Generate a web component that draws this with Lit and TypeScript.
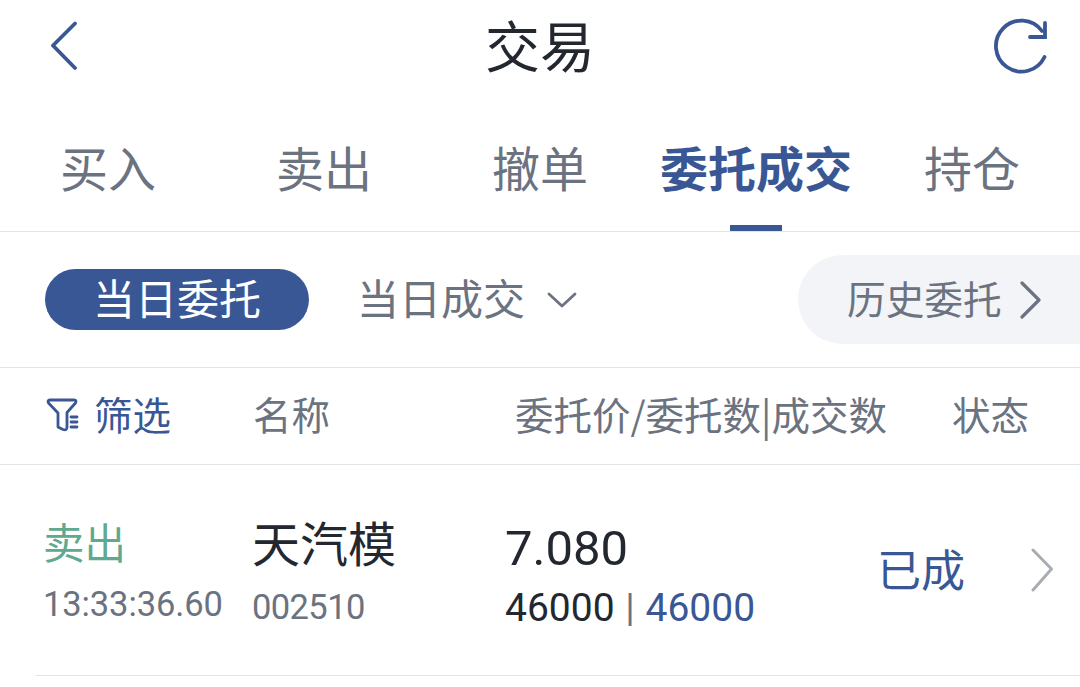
import { LitElement, html, css } from "lit";
import { customElement } from "lit/decorators.js";

@customElement("app-root")
export class AppRoot extends LitElement {
  static styles = css`
    :host {
      display: block;
      width: 1080px;
      height: 687px;
      overflow: hidden;
      background: #fff;
      font-family: "Noto Sans CJK SC", "Noto Sans", sans-serif;
      color: #6b7280;
    }
    .top {
      height: 93px;
      box-sizing: border-box;
      padding: 0 31px 1px 31px;
      display: grid;
      grid-template-columns: 1fr auto 1fr;
      align-items: center;
    }
    .back { display: block; width: 28px; height: 50px; margin-left: 19px; }
    .title { font-size: 55px; line-height: 70px; margin-bottom: 6px; color: #23272f; }
    .refresh { display: block; width: 56px; height: 56px; justify-self: end; }
    .tabs {
      height: 138px;
      display: grid;
      grid-template-columns: repeat(5, 216px);
      border-bottom: 1px solid #e3e4e6;
    }
    .tab {
      position: relative;
      height: 138px;
      box-sizing: border-box;
      padding-top: 8px;
      display: flex;
      align-items: center;
      justify-content: center;
      font-size: 48px;
      white-space: nowrap;
    }
    .tab.on { color: #3a5795; font-weight: 700; }
    .tab.on::after {
      content: "";
      position: absolute;
      left: 82px;
      bottom: 0;
      width: 52px;
      height: 6px;
      background: #3a5795;
    }
    .filters {
      height: 135px;
      display: flex;
      align-items: center;
      padding-left: 45px;
      border-bottom: 1px solid #e3e4e6;
    }
    .pill {
      width: 264px;
      height: 61px;
      box-sizing: border-box;
      padding-bottom: 6px;
      border-radius: 31px;
      background: #3a5795;
      color: #fff;
      font-size: 42px;
      line-height: 55px;
      text-align: center;
    }
    .today {
      margin-left: 48px;
      font-size: 42px;
      line-height: 56px;
      display: flex;
      align-items: center;
      gap: 22px;
    }
    .today span { margin-bottom: 6px; }
    .down { display: block; width: 30px; height: 16px; }
    .history {
      margin-left: auto;
      width: 282px;
      height: 89px;
      box-sizing: border-box;
      padding-left: 49px;
      border-radius: 45px 0 0 45px;
      background: #f2f4f7;
      display: flex;
      align-items: center;
      gap: 17px;
      font-size: 38.7px;
    }
    .history span { margin-bottom: 5px; }
    .chev { display: block; width: 23px; height: 38px; }
    .head {
      height: 96px;
      display: flex;
      align-items: center;
      font-size: 38.5px;
      border-bottom: 1px solid #e3e4e6;
      white-space: nowrap;
    }
    .head-text { line-height: 50px; margin-bottom: 6px; }
    .filter {
      width: 253px;
      box-sizing: border-box;
      padding-left: 46px;
      display: flex;
      align-items: center;
      gap: 14px;
      color: #3a5795;
    }
    .funnel { display: block; width: 34px; height: 34px; margin-bottom: 2px; }
    .h-name { width: 262px; }
    .h-nums { width: 437px; }
    .row {
      height: 210px;
      margin-left: 36px;
      display: flex;
      align-items: center;
      border-bottom: 1px solid #e3e4e6;
    }
    .c1 { width: 217px; padding-left: 8px; box-sizing: border-box; }
    .c2 { width: 252px; }
    .c3 { width: 374px; padding-top: 2px; }
    .side { font-size: 41.5px; line-height: 50px; color: #5fa98f; margin-top: 5px; margin-left: -1px; }
    .num { font-family: "Roboto", sans-serif; }
    .time { font-size: 34.5px; letter-spacing: -0.1px; line-height: 50px; margin-top: 13px; margin-left: -1px; }
    .name { font-size: 48px; line-height: 60px; margin-left: -1px; color: #23272f; }
    .code { font-size: 34.5px; letter-spacing: -0.6px; line-height: 44px; margin-top: 14px; margin-left: -1px; }
    .price { font-size: 49px; line-height: 58px; color: #23272f; margin-top: 10px; }
    .qty { font-size: 39px; line-height: 50px; color: #23272f; margin-top: 5px; }
    .sep { color: #6b7280; margin: 0 1px; }
    .blue { color: #3a5795; }
    .status { font-size: 44px; color: #3a5795; width: 153px; margin-left: -2px; margin-bottom: 4px; }
    .go { display: block; width: 24px; height: 44px; margin-left: 1px; }
  `;

  render() {
    return html`
      <div class="top">
        <svg class="back" viewBox="0 0 28 50" fill="none" stroke="#3a5795" stroke-width="3.8" stroke-linecap="round" stroke-linejoin="round">
          <path d="M25 2.5 L3 24.5 L25 47" />
        </svg>
        <div class="title">交易</div>
        <svg class="refresh" viewBox="0 0 56 56" fill="none" stroke="#3a5795" stroke-width="3.8" stroke-linecap="round">
          <path d="M49 13 A25.5 25.5 0 1 0 51.5 39" />
          <path d="M52 5 V19 H37" />
        </svg>
      </div>
      <div class="tabs">
        <div class="tab">买入</div>
        <div class="tab">卖出</div>
        <div class="tab">撤单</div>
        <div class="tab on">委托成交</div>
        <div class="tab">持仓</div>
      </div>
      <div class="filters">
        <div class="pill">当日委托</div>
        <div class="today">
          <span>当日成交</span>
          <svg class="down" viewBox="0 0 30 16" fill="none" stroke="#6b7280" stroke-width="2.8" stroke-linecap="round" stroke-linejoin="round">
            <path d="M2 2 L15 14 L28 2" />
          </svg>
        </div>
        <div class="history">
          <span>历史委托</span>
          <svg class="chev" viewBox="0 0 23 38" fill="none" stroke="#6b7280" stroke-width="3.2" stroke-linecap="round" stroke-linejoin="round">
            <path d="M3 2 L20 19 L3 36" />
          </svg>
        </div>
      </div>
      <div class="head">
        <div class="filter">
          <svg class="funnel" viewBox="0 0 34 34" fill="none" stroke="#3a5795" stroke-width="2.8" stroke-linecap="round" stroke-linejoin="round">
            <path d="M4 2 H28 Q31 2 29.5 5 L21 14.5 V29 Q21 33 17 31.5 L12 29 V15 L2.5 5 Q1 2.5 4 2 Z" />
            <path d="M25 19 H31 M25 24 H31 M25 29 H31" />
          </svg>
          <span class="head-text">筛选</span>
        </div>
        <div class="h-name head-text">名称</div>
        <div class="h-nums head-text">委托价/委托数|成交数</div>
        <div class="head-text">状态</div>
      </div>
      <div class="row">
        <div class="c1">
          <div class="side">卖出</div>
          <div class="time num">13:33:36.60</div>
        </div>
        <div class="c2">
          <div class="name">天汽模</div>
          <div class="code num">002510</div>
        </div>
        <div class="c3">
          <div class="price num">7.080</div>
          <div class="qty num">46000 <span class="sep">|</span> <span class="blue">46000</span></div>
        </div>
        <div class="status">已成</div>
        <svg class="go" viewBox="0 0 24 44" fill="none" stroke="#a9acb3" stroke-width="3" stroke-linecap="round" stroke-linejoin="round">
          <path d="M2 2 L20.5 21 L2 42" />
        </svg>
      </div>
    `;
  }
}
